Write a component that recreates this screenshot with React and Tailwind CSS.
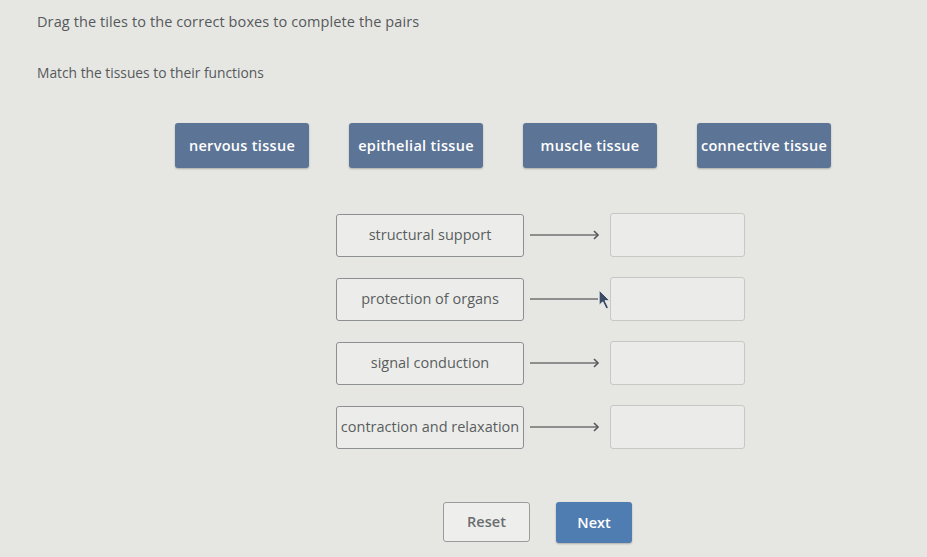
import React from 'react';

const tissues = ['nervous tissue', 'epithelial tissue', 'muscle tissue', 'connective tissue'];
const functions = ['structural support', 'protection of organs', 'signal conduction', 'contraction and relaxation'];

function Arrow({ head = true }) {
  return (
    <svg width="70" height="12" viewBox="0 0 70 12" className="shrink-0">
      <line x1="0" y1="6" x2="68" y2="6" stroke="#6f7273" strokeWidth="1.3" />
      {head && <path d="M64 2 L68 6 L64 10" fill="none" stroke="#55585a" strokeWidth="1.6" />}
    </svg>
  );
}

export default function App() {
  return (
    <div
      className="relative w-[927px] h-[557px] overflow-hidden bg-[#e6e7e3] text-[#56595b]"
      style={{ fontFamily: '"Open Sans", "Liberation Sans", sans-serif' }}
    >
      <div className="pl-[37px] pt-[12px]">
        <p className="text-[14.5px] leading-[20px] tracking-[0.1px]">Drag the tiles to the correct boxes to complete the pairs</p>
        <p className="mt-[31px] text-[13.8px] leading-[20px]">Match the tissues to their functions</p>
      </div>

      <div className="mt-[40px] ml-[175px] flex gap-[40px]">
        {tissues.map(t => (
          <div
            key={t}
            className="w-[134px] h-[45px] flex items-center justify-center rounded-[3px] bg-[#5c7495] text-white text-[14.5px] font-semibold tracking-[0.3px] shadow-[0_1px_2px_rgba(0,0,0,0.25)] whitespace-nowrap"
          >
            {t}
          </div>
        ))}
      </div>

      <div className="mt-[45px] ml-[336px] flex flex-col gap-[20px]">
        {functions.map((f, i) => (
          <div key={f} className="flex items-center">
            <div className="w-[188px] h-[43px] flex items-center justify-center rounded-[3px] border-[1.5px] border-[#8d9090] bg-[#ecedea] text-[14.5px] text-[#5a5d5f] whitespace-nowrap">
              {f}
            </div>
            <div className="ml-[6px]">
              <Arrow head={i !== 1} />
            </div>
            <div className="ml-[10px] w-[135px] h-[44px] rounded-[3px] border border-[#c6c8c6] bg-[#ebece9]" />
          </div>
        ))}
      </div>

      <div className="mt-[53px] ml-[443px] flex gap-[26px]">
        <button className="w-[87px] h-[40px] rounded-[3px] border border-[#9a9c9c] bg-[#eeefec] text-[14.5px] font-semibold text-[#6a6d70]">
          Reset
        </button>
        <button className="w-[76px] h-[41px] rounded-[3px] bg-[#4f7cb1] text-[14.5px] font-semibold text-white shadow-[0_1px_2px_rgba(0,0,0,0.25)]">
          Next
        </button>
      </div>

      {/* mouse cursor */}
      <svg className="absolute left-[598px] top-[289px]" width="14" height="21" viewBox="0 0 12 18">
        <path d="M1 1 L1 14 L4 11 L7 17 L9 16 L6 10 L10 10 Z" fill="#3a4a66" stroke="#e8e9e6" strokeWidth="0.8" />
      </svg>
    </div>
  );
}
